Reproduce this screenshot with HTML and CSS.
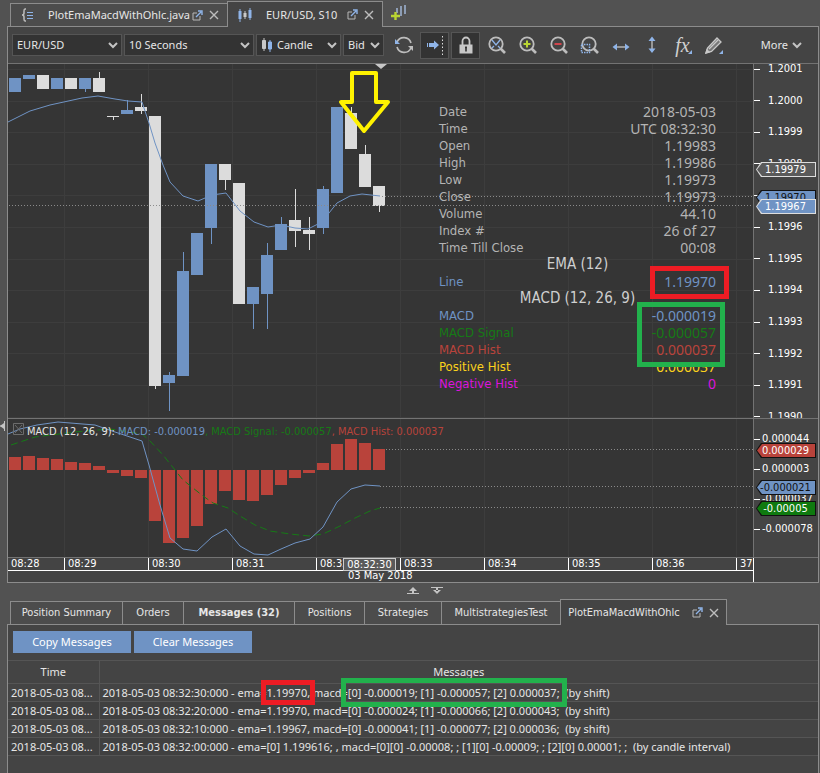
FILE: index.html
```html
<!DOCTYPE html>
<html lang="en">
<head>
    <meta charset="UTF-8">
    <meta name="viewport" content="width=device-width, initial-scale=1.0">
    <title>EUR/USD, S10</title>
    <link rel="stylesheet" href="styles.css">
</head>
<body>
    <!-- Shared icons -->
    <svg class="sprite" aria-hidden="true">
        <symbol id="chevron" viewBox="0 0 10 7"><path d="M1 1l4 4 4-4" fill="none" stroke="#c4c4c4" stroke-width="2"/></symbol>
        <symbol id="popout" viewBox="0 0 11 11">
            <path d="M5 3H1v7h7V6" fill="none" stroke="#b8b8b8"/>
            <path d="M4 7l5-5M6 1h4v4" fill="none" stroke="#8fb4e8" stroke-width="1.4"/>
        </symbol>
        <symbol id="close" viewBox="0 0 10 10"><path d="M1 1l8 8M9 1l-8 8" stroke="#bdbdbd" stroke-width="1.4"/></symbol>
        <symbol id="lens" viewBox="0 0 20 20">
            <circle cx="9" cy="9" r="6.7" fill="none" stroke="#bdbdbd" stroke-width="1.8"/>
            <path d="M13.5 13.5l4.5 4.5" stroke="#bdbdbd" stroke-width="2.6"/>
        </symbol>
    </svg>

    <nav class="tabs top-tabs">
        <div class="tab">
            <svg width="13" height="14" viewBox="0 0 13 14"><path d="M5 1H4Q3 1 3 3v2q0 2-2 2 2 0 2 2v2q0 2 1 2h1" fill="none" stroke="#bdbdbd" stroke-width="1.5"/><path d="M6 4.500h6M6 7.500h6M6 10.500h6" stroke="#8fb4e8"/></svg>
            <a href="#">PlotEmaMacdWithOhlc.java</a>
            <button aria-label="Detach"><svg width="11" height="11"><use href="#popout"/></svg></button>
            <button aria-label="Close"><svg width="10" height="10"><use href="#close"/></svg></button>
        </div>
        <div class="tab active">
            <svg width="14" height="14" viewBox="0 0 14 14"><path d="M2 1v13M12 0v12" stroke="#8fb4e8"/><path d="M7 3v8" stroke="#c8c8c8"/><path d="M.5 3h3v8h-3zM10.500 2h3v8h-3z" fill="#8fb4e8"/><path d="M5.500 5h3v4h-3z" fill="#c8c8c8"/></svg>
            <a href="#">EUR/USD, S10</a>
            <button aria-label="Detach"><svg width="11" height="11"><use href="#popout"/></svg></button>
            <button aria-label="Close"><svg width="10" height="10"><use href="#close"/></svg></button>
        </div>
        <button class="new-chart" aria-label="New chart">
            <svg width="16" height="16" viewBox="0 0 16 16"><path d="M6 3v5M10 1v10M14 0v9" stroke="#8d9db5" stroke-width="2"/><path d="M4.500 7v8M0 11h9" stroke="#b9d432" stroke-width="2.4"/></svg>
        </button>
    </nav>

    <main class="panel chart-panel">
        <div class="toolbar">
            <label class="select instrument">
                <select aria-label="Instrument"><option>EUR/USD</option></select>
                <svg class="arrow"><use href="#chevron"/></svg>
            </label>
            <label class="select period">
                <select aria-label="Period"><option>10 Seconds</option></select>
                <svg class="arrow"><use href="#chevron"/></svg>
            </label>
            <label class="select kind">
                <svg class="lead" width="12" height="14" viewBox="0 0 12 14"><path d="M1.500 2.500h3v8h-3zM3 0v13" fill="#c8c8c8" stroke="#c8c8c8" stroke-width="1"/><path d="M7.500 4h3v7h-3zM9 2v12" fill="#8fb4e8" stroke="#8fb4e8"/></svg>
                <select aria-label="Chart type"><option>Candle</option></select>
                <svg class="arrow"><use href="#chevron"/></svg>
            </label>
            <label class="select side">
                <select aria-label="Offer side"><option>Bid</option></select>
                <svg class="arrow"><use href="#chevron"/></svg>
            </label>
            <div class="tools">
                <button aria-label="Refresh"><svg viewBox="0 0 20 20"><path d="M3 7a7.500 7.500 0 0 1 14 1" fill="none" stroke="#bdbdbd" stroke-width="1.700"/><path d="M17 13A7.500 7.500 0 0 1 3 12" fill="none" stroke="#bdbdbd" stroke-width="1.700"/><path d="M1 4v5h5z" fill="#8fb4e8"/><path d="M19 16v-5h-5z" fill="#bdbdbd"/></svg></button>
                <button class="pressed" aria-label="Auto shift"><svg viewBox="0 0 20 20"><path d="M2 8h1v4H2zM4 8h5V5.500l5 4.500-5 4.500V12H4z" fill="#8fb4e8"/><path d="M17.500 1v19" stroke="#ddd" stroke-dasharray="1.500 2"/></svg></button>
                <button class="pressed" aria-label="Lock"><svg viewBox="0 0 20 20"><path d="M6.500 10V6a3.500 3.500 0 0 1 7 0v4" fill="none" stroke="#c8c8c8" stroke-width="1.800"/><path d="M3.500 9.500h13v9h-13z" fill="#c8c8c8"/><path d="M10 11.500v5M9 12.500h2" stroke="#333" stroke-width="1.600"/></svg></button>
                <button aria-label="Zoom to fit"><svg viewBox="0 0 20 20"><use href="#lens"/><path d="M5 5l4 5 4-5M5 13l2-2M13 13l-2-2" fill="none" stroke="#8fb4e8" stroke-width="1.300"/></svg></button>
                <button aria-label="Zoom in"><svg viewBox="0 0 20 20"><use href="#lens"/><path d="M9 5.500v7M5.500 9h7" stroke="#b9d432" stroke-width="2"/></svg></button>
                <button aria-label="Zoom out"><svg viewBox="0 0 20 20"><use href="#lens"/><path d="M5.500 9h7" stroke="#d0454c" stroke-width="2"/></svg></button>
                <button aria-label="Zoom to area"><svg viewBox="0 0 20 20"><use href="#lens"/><path d="M1.500 9.500h8v8h-8z" fill="none" stroke="#8fb4e8" stroke-width="1.500" stroke-dasharray="1.500 1"/></svg></button>
                <button aria-label="Fit width"><svg viewBox="0 0 20 20"><path d="M4 12h12" stroke="#c4c4c4" stroke-width="1.300"/><path d="M1.500 12L6 8.500v7zM18.500 12L14 8.500v7z" fill="#8fb4e8"/></svg></button>
                <button aria-label="Fit height"><svg viewBox="0 0 20 20"><path d="M10 4v12" stroke="#c4c4c4" stroke-width="1.300"/><path d="M10 1.500L13.500 6h-7zM10 18l3.500-4.500h-7z" fill="#8fb4e8"/></svg></button>
                <button class="fx" aria-label="Indicators"><i>fx</i><svg viewBox="0 0 20 20"><path d="M19 15v4h-4z" fill="#8fb4e8"/></svg></button>
                <button aria-label="Draw"><svg viewBox="0 0 20 20"><path d="M2 18l1.500-5L13 3l4 4L7.500 16.500z" fill="#777" stroke="#c8c8c8" stroke-width="1.300"/><path d="M5 14l9-9M2 18l3-1-2-2z" fill="#c8c8c8" stroke="#c8c8c8" stroke-width="1.300"/><path d="M19 15v4h-4z" fill="#8fb4e8"/></svg></button>
            </div>
            <button class="more">More <svg width="10" height="7"><use href="#chevron"/></svg></button>
        </div>

        <div class="chart">
            <section class="plot price-plot">
                <svg class="canvas" id="price">
                    <g class="grid" id="price-grid"></g>
                    <g id="candles"></g>
                    <polyline class="blue-line" points="0,58 22,47 42,41 74,34 90,32 107,35 120,37 134,38 141,59 147,79 155,101 162,118 175,132 190,137 204,131 218,129 232,147 246,158 260,163 273,161 287,164 300,165 310,160 317,154 329,139 342,132 354,130 372,132"/>
                    <path class="dots" d="M1 141.500H2000M374 132.500H2000"/>
                    <path class="shift" d="M367 0h12l-6 5z"/>
                    <path class="callout" d="M344 9h24v29h12l-24 29-23-29h11z"/>
                </svg>
                <table class="info">
                    <tr><td>Date</td><td>2018-05-03</td></tr>
                    <tr><td>Time</td><td>UTC 08:32:30</td></tr>
                    <tr><td>Open</td><td>1.19983</td></tr>
                    <tr><td>High</td><td>1.19986</td></tr>
                    <tr><td>Low</td><td>1.19973</td></tr>
                    <tr><td>Close</td><td>1.19973</td></tr>
                    <tr><td>Volume</td><td>44.10</td></tr>
                    <tr><td>Index #</td><td>26 of 27</td></tr>
                    <tr><td>Time Till Close</td><td>00:08</td></tr>
                    <tr><th colspan="2">EMA (12)</th></tr>
                    <tr class="blue"><td>Line</td><td>1.19970</td></tr>
                    <tr><th colspan="2">MACD (12, 26, 9)</th></tr>
                    <tr class="blue"><td>MACD</td><td>-0.000019</td></tr>
                    <tr class="green"><td>MACD Signal</td><td>-0.000057</td></tr>
                    <tr class="red"><td>MACD Hist</td><td>0.000037</td></tr>
                    <tr class="yellow"><td>Positive Hist</td><td>0.000037</td></tr>
                    <tr class="magenta"><td>Negative Hist</td><td>0</td></tr>
                </table>
                <div class="box box-red"></div>
                <div class="box box-green"></div>
            </section>
            <aside class="axis price-axis">
                <ul>
                    <li>1.2001</li><li>1.2000</li><li>1.1999</li><li>1.1998</li><li>1.1997</li><li>1.1996</li>
                    <li>1.1995</li><li>1.1994</li><li>1.1993</li><li>1.1992</li><li>1.1991</li><li>1.1990</li>
                </ul>
                <span class="tag tag-cursor"><b>1.19979</b></span>
                <span class="tag tag-ema"><b>1.19970</b></span>
                <span class="tag tag-last"><b>1.19967</b></span>
            </aside>

            <section class="plot macd-plot">
                <svg class="canvas">
                    <g class="grid" id="macd-grid"></g>
                    <g id="bars"></g>
                    <polyline class="signal" points="3,26 27,18 67,13 102,10 134,15 142,22 155,36 175,61 195,77 205,84 220,89 232,97 247,106 262,112 282,115 301,117 315,115 332,107 347,99 362,92 372,89"/>
                    <polyline class="blue-line" points="0,15 12,10 29,6 50,3 87,6 107,13 134,22 141,46 152,86 162,119 175,130 189,132 204,118 218,110 232,127 246,135 260,136 273,130 287,124 302,120 315,108 329,83 343,70 357,66 372,67"/>
                    <path class="dots" d="M378 30.500H2000M372 67.500H2000M372 88.500H2000"/>
                    <path d="M5.500 4.500h10v11h-10zM7 6l7 8M14 6l-7 8" fill="none" stroke="#6c6c6c"/>
                </svg>
                <p class="legend">MACD (12, 26, 9): <span class="blue">MACD: -0.000019</span><span class="green">, MACD Signal: -0.000057</span><span class="red">, MACD Hist: 0.000037</span></p>
            </section>
            <aside class="axis macd-axis">
                <ul><li>0.000044</li><li>0.000003</li><li>-0.000037</li><li>-0.000078</li></ul>
                <span class="tag tag-hist"><b>0.000029</b></span>
                <span class="tag tag-macd"><b>-0.000021</b></span>
                <span class="tag tag-signal"><b>-0.00005</b></span>
            </aside>

            <div class="time-axis">
                <ol><li>08:28</li><li>08:29</li><li>08:30</li><li>08:31</li><li>08:32</li><li>08:33</li><li>08:34</li><li>08:35</li><li>08:36</li><li>37</li></ol>
                <span class="time-tag">08:32:30</span>
                <span class="date-tag">03 May 2018</span>
            </div>
            <div class="axis corner"></div>
        </div>
        <svg class="side-handle" width="6" height="10" viewBox="0 0 6 10"><path d="M0 5l4-3v6z" fill="#c4c4c4"/><path d="M4.500 0v10M0 5h4" stroke="#c4c4c4"/></svg>
    </main>

    <div class="splitter">
        <svg width="12" height="7" viewBox="0 0 12 7"><path d="M2 4l4-4 4 4zM5 3h2v3H5zM0 6h12v1H0z" fill="#c4c4c4"/></svg>
        <svg width="12" height="7" viewBox="0 0 12 7"><path d="M2 3l4 4 4-4zM5 1h2v3H5zM0 0h12v1H0z" fill="#c4c4c4"/></svg>
    </div>

    <nav class="tabs bottom-tabs">
        <a class="tab" href="#">Position Summary</a>
        <a class="tab" href="#">Orders</a>
        <a class="tab strong" href="#">Messages (32)</a>
        <a class="tab" href="#">Positions</a>
        <a class="tab" href="#">Strategies</a>
        <a class="tab" href="#">MultistrategiesTest</a>
        <div class="tab active">
            <a href="#">PlotEmaMacdWithOhlc</a>
            <button aria-label="Detach"><svg width="11" height="11"><use href="#popout"/></svg></button>
            <button aria-label="Close"><svg width="10" height="10"><use href="#close"/></svg></button>
        </div>
    </nav>

    <section class="panel messages-panel">
        <div class="actions">
            <button>Copy Messages</button>
            <button>Clear Messages</button>
        </div>
        <table class="messages">
            <thead>
                <tr><th class="time">Time</th><th>Messages</th></tr>
            </thead>
            <tbody>
                <tr><td>2018-05-03 08...</td><td>2018-05-03 08:32:30:000 - ema=<mark class="mark-red">1.19970,</mark> macd=<mark class="mark-green">[0] -0.000019; [1] -0.000057; [2] 0.000037;</mark>&nbsp; (by shift)</td></tr>
                <tr><td>2018-05-03 08...</td><td>2018-05-03 08:32:20:000 - ema=1.19970, macd=[0] -0.000024; [1] -0.000066; [2] 0.000043;&nbsp; (by shift)</td></tr>
                <tr><td>2018-05-03 08...</td><td>2018-05-03 08:32:10:000 - ema=1.19967, macd=[0] -0.000041; [1] -0.000077; [2] 0.000036;&nbsp; (by shift)</td></tr>
                <tr><td>2018-05-03 08...</td><td>2018-05-03 08:32:00:000 - ema=[0] 1.199616; , macd=[0][0] -0.00008; ; [1][0] -0.00009; ; [2][0] 0.00001; ;&nbsp; (by candle interval)</td></tr>
            </tbody>
        </table>
    </section>

    <script src="chart.js"></script>
</body>
</html>
```
FILE: chart.js
```js
const STEP = 14;
const BAR = 12;

// [direction, body top, body bottom, wick top, wick bottom]
const candles = [
    ['up', 14, 28, 14, 28],
    ['up', 11, 15, 11, 15],
    ['down', 11, 25, 11, 25],
    ['up', 14, 25, 14, 25],
    ['down', 14, 25, 14, 25],
    ['up', 14, 25, 14, 28],
    ['down', 14, 28, 8, 28],
    ['down', 52, 53, 52, 56],
    ['up', 46, 50, 36, 50],
    ['down', 43, 47, 30, 50],
    ['down', 52, 322, 52, 325],
    ['up', 311, 319, 308, 347],
    ['up', 207, 312, 188, 312],
    ['up', 169, 211, 169, 211],
    ['up', 100, 164, 100, 180],
    ['down', 100, 116, 100, 126],
    ['down', 119, 240, 119, 240],
    ['up', 223, 240, 223, 265],
    ['up', 191, 230, 179, 265],
    ['up', 160, 186, 153, 186],
    ['down', 156, 167, 125, 183],
    ['down', 166, 170, 153, 186],
    ['up', 125, 164, 122, 170],
    ['up', 43, 129, 43, 129],
    ['down', 49, 85, 43, 85],
    ['down', 90, 123, 81, 123],
    ['down', 122, 142, 122, 148]
];

const hist = [13, 14, 12, 11, 8, 7, 4, -3, -6, -8, -51, -73, -68, -56, -34, -21, -30, -31, -25, -15, -8, -3, 7, 26, 31, 27, 21];
const ZERO = 51;

function rect(parent, cls, x, y, width, height) {
    const el = document.createElementNS('http://www.w3.org/2000/svg', 'rect');
    el.setAttribute('class', cls);
    el.setAttribute('x', x);
    el.setAttribute('y', y);
    el.setAttribute('width', width);
    el.setAttribute('height', height);
    parent.appendChild(el);
}

const candleLayer = document.getElementById('candles');
candles.forEach(([dir, top, bottom, high, low], i) => {
    const x = 1 + i * STEP;
    rect(candleLayer, dir, x, top, BAR, bottom - top);
    rect(candleLayer, dir, x + 6, high, 1, low - high);
});

const barLayer = document.getElementById('bars');
hist.forEach((value, i) => {
    rect(barLayer, 'bar', 1 + i * STEP, value > 0 ? ZERO - value : ZERO, BAR, Math.abs(value));
});

// Grid: one vertical line per minute, one horizontal line per price label
const priceGrid = document.getElementById('price-grid');
const macdGrid = document.getElementById('macd-grid');
for (let x = 56; x < 2000; x += STEP * 6) {
    rect(priceGrid, 'line', x, 0, 1, 354);
    rect(macdGrid, 'line', x, 0, 1, 138);
}
for (let i = 0; i < 12; i++) {
    rect(priceGrid, 'line', 0, Math.round(5 + i * 31.6), 2000, 1);
}
```
FILE: styles.css
```css
* {
    box-sizing: border-box;
}

body {
    margin: 0;
    padding: 0 1px 0 7px;
    min-height: 100vh;
    display: flex;
    flex-direction: column;
    background-color: #525252;
    color: #e6e6e6;
    font-family: "DejaVu Sans Condensed", sans-serif;
    font-size: 11px;
    line-height: 14px;
}

.top-tabs,
.toolbar,
.actions,
.messages {
    font-family: "Noto Sans", sans-serif;
}

button {
    border: none;
    padding: 0;
    background: none;
    color: inherit;
    font: inherit;
    cursor: pointer;
}

a {
    color: inherit;
    text-decoration: none;
}

.sprite {
    position: absolute;
    width: 0;
    height: 0;
}

.blue { color: #6f93c4; }
.green { color: #167a16; }
.red { color: #b9433b; }
.yellow { color: #fbd21c; }
.magenta { color: #dc14dc; }

/* Tabs */
.tabs {
    display: grid;
    align-items: end;
    padding-left: 3px;
    border-bottom: 1px solid #8c8c8c;
    white-space: nowrap;
}

.tab {
    display: flex;
    align-items: center;
    justify-content: center;
    height: 23px;
    border: 1px solid #8c8c8c;
    border-width: 1px 0 0 1px;
    background-color: #4c4c4c;
}

.tab.active {
    height: 26px;
    margin-bottom: -1px;
    border-right-width: 1px;
    background-color: #444;
}

.tab button {
    display: flex;
    margin-left: 6px;
}

.tab a + button {
    margin-left: 12px;
}

.top-tabs {
    grid-template-columns: 217px 156px 1fr;
    height: 27px;
}

.top-tabs .tab {
    justify-content: flex-start;
    padding-left: 10px;
}

.top-tabs .tab a {
    margin-left: 14px;
}

.top-tabs .tab a + button {
    margin-left: auto;
}

.top-tabs .tab button:last-child {
    margin-right: 8px;
}

.new-chart {
    align-self: center;
    justify-self: start;
    display: flex;
    margin-left: 8px;
}

.bottom-tabs {
    grid-template-columns: 112px 61px 111px 70px 77px 119px 167px;
    height: 26px;
}

.strong {
    font-weight: bold;
}

/* Panels */
.panel {
    border: 1px solid #8c8c8c;
    border-top: none;
    background-color: #444;
}

.chart-panel {
    position: relative;
}

/* Toolbar */
.toolbar {
    display: flex;
    align-items: center;
    height: 36px;
    padding: 0 16px 0 4px;
    gap: 2px;
}

.select {
    position: relative;
    display: flex;
    align-items: center;
    height: 22px;
    border: 1px solid #555;
    background-color: #333;
}

.select select {
    appearance: none;
    width: 100%;
    height: 100%;
    border: none;
    padding: 0 4px;
    background: none;
    color: #e6e6e6;
    font: inherit;
}

.select .arrow {
    position: absolute;
    right: 3px;
    width: 10px;
    height: 7px;
    pointer-events: none;
}

.lead {
    flex: none;
    margin-left: 4px;
}

.instrument { width: 110px; }
.period { width: 130px; }
.kind { width: 85px; }
.side { width: 41px; }

.tools {
    display: flex;
    gap: 2px;
    margin-left: 3px;
}

.tools button {
    position: relative;
    display: flex;
    align-items: center;
    justify-content: center;
    width: 29px;
    height: 27px;
}

.tools svg {
    width: 20px;
    height: 20px;
}

.tools .pressed {
    border: 1px solid #555;
    background-color: #333;
}

.fx i {
    position: absolute;
    font: italic 20px/20px "Liberation Serif", serif;
    color: #d0d0d0;
}

.more {
    display: flex;
    align-items: center;
    gap: 4px;
    margin-left: auto;
}

/* Chart */
.chart {
    display: grid;
    grid-template-columns: 1fr 65px;
    grid-template-rows: 355px 139px 24px;
    border-top: 1px solid #737373;
}

.plot {
    position: relative;
    min-width: 0;
    overflow: hidden;
    background-color: #353535;
    border-bottom: 1px solid #737373;
}

.canvas {
    position: absolute;
    width: 100%;
    height: 100%;
}

.line { fill: #3d3d3d; }
.up { fill: #6f93c4; }
.down { fill: #dcdcdc; }
.bar { fill: #b9433b; }

.blue-line {
    fill: none;
    stroke: #6f93c4;
}

.signal {
    fill: none;
    stroke: #167a16;
    stroke-dasharray: 7 4;
}

.dots {
    stroke: #8a8a8a;
    stroke-dasharray: 1 2;
}

.shift {
    fill: #c8c8c8;
}

.callout {
    fill: none;
    stroke: #fff200;
    stroke-width: 4;
    stroke-linejoin: round;
}

.info {
    position: absolute;
    top: 39px;
    right: 36px;
    width: 279px;
    border-collapse: collapse;
    font-size: 13px;
    line-height: 17px;
    white-space: nowrap;
}

.info tr {
    height: 17px;
}

.info tr:not([class]) {
    color: #b4b4b4;
}

.info td,
.info th {
    padding: 0 1px;
    font-weight: normal;
}

.info th {
    color: #cfcfcf;
    font-size: 15px;
}

.info td:last-child {
    font-family: "Noto Sans", sans-serif;
    font-size: 14px;
    text-align: right;
}

.box {
    position: absolute;
    border: 5px solid;
}

.box-red {
    top: 202px;
    right: 24px;
    width: 79px;
    height: 33px;
    border-color: #ed1c24;
}

.box-green {
    top: 238px;
    right: 28px;
    width: 88px;
    height: 65px;
    border-color: #22b14c;
}

.legend {
    position: relative;
    margin: 6px 0 0 19px;
    white-space: nowrap;
}

/* Value axes */
.axis {
    position: relative;
    overflow: hidden;
    border-left: 1px solid #737373;
    border-bottom: 1px solid #737373;
    color: #fff;
}

.axis ul {
    display: flex;
    flex-direction: column;
    justify-content: space-between;
    margin: 0;
    padding: 0;
    list-style: none;
}

.axis li {
    display: flex;
    align-items: center;
    gap: 2px;
    height: 14px;
}

.axis li::before {
    content: "";
    width: 6px;
    height: 1px;
    background-color: #fff;
}

.price-axis ul {
    height: 362px;
    margin-top: -2px;
}

.price-axis li {
    gap: 8px;
}

.macd-axis ul {
    height: 104px;
    margin-top: 13px;
}

.tag {
    position: absolute;
    right: 2px;
    width: 60px;
    height: 15px;
    padding: 1px;
    clip-path: polygon(0 50%, 5px 0, 100% 0, 100% 100%, 5px 100%);
    background-color: #111;
}

.tag b {
    display: block;
    height: 13px;
    padding-right: 1px;
    clip-path: polygon(0 50%, 5px 0, 100% 0, 100% 100%, 5px 100%);
    font-weight: normal;
    line-height: 13px;
    text-align: center;
}

.tag-cursor { top: 98px; background-color: #ddd; }
.tag-cursor b { background-color: #5a5a5a; }
.tag-ema { top: 126px; }
.tag-ema b { background-color: #6f93c4; color: #111; }
.tag-last { top: 135px; background-color: #ddd; }
.tag-last b { background-color: #6f93c4; }
.tag-hist { top: 24px; }
.tag-hist b { background-color: #b9433b; }
.tag-macd { top: 61px; }
.tag-macd b { background-color: #6f93c4; color: #111; }
.tag-signal { top: 82px; }
.tag-signal b { background-color: #0f7a0f; }

/* Time axis */
.time-axis {
    position: relative;
    min-width: 0;
    overflow: hidden;
    color: #fff;
}

.time-axis ol {
    display: grid;
    grid-template-columns: 56px;
    grid-auto-columns: 84px;
    grid-auto-flow: column;
    margin: 0;
    padding: 0;
    border-bottom: 1px solid #fff;
    list-style: none;
    line-height: 12px;
}

.time-axis li {
    padding-left: 3px;
}

.time-axis li + li {
    border-left: 1px solid #fff;
}

.time-tag {
    position: absolute;
    left: 335px;
    top: 0;
    width: 53px;
    height: 13px;
    border: 1px solid #ccc;
    background-color: #5a5a5a;
    line-height: 11px;
    text-align: center;
}

.date-tag {
    position: absolute;
    left: 340px;
    top: 12px;
    line-height: 12px;
}

.corner {
    border-left-color: #fff;
    border-bottom: none;
}

.side-handle {
    position: absolute;
    left: -8px;
    top: 394px;
}

.splitter {
    display: flex;
    justify-content: center;
    gap: 12px;
    height: 16px;
    padding: 4px 0 0 24px;
}

/* Messages */
.messages-panel {
    flex: 1;
    border-bottom: none;
}

.actions {
    display: flex;
    gap: 3px;
    padding: 6px 5px 7px;
}

.actions button {
    width: 118px;
    height: 22px;
    background-color: #6f93c4;
    color: #fff;
}

.messages {
    width: 100%;
    table-layout: fixed;
    border-collapse: collapse;
    white-space: nowrap;
}

.messages th,
.messages td {
    height: 18px;
    padding: 0 3px;
    border: 1px solid #555;
    border-width: 1px 0;
    text-align: left;
}

.messages th {
    height: 23px;
    font-weight: normal;
    text-align: center;
}

.messages .time {
    width: 91px;
}

.messages tr > :last-child {
    border-left-width: 1px;
}

.messages tbody tr:nth-child(even) {
    background-color: #404040;
}

mark {
    position: relative;
    background: none;
    color: inherit;
}

.mark-red {
    outline: 5px solid #ed1c24;
}

.mark-green {
    outline: 5px solid #22b14c;
    outline-offset: 2px;
}
```
